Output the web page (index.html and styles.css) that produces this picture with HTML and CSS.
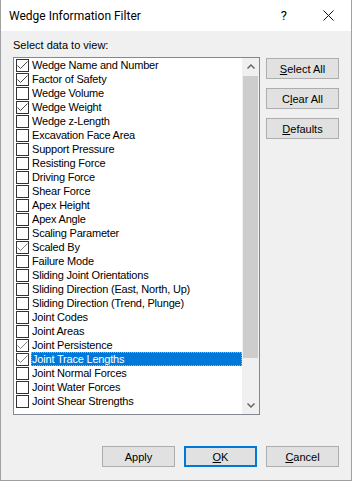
FILE: index.html
```html
<!DOCTYPE html>
<html lang="en">
<head>
    <meta charset="UTF-8">
    <meta name="viewport" content="width=device-width, initial-scale=1.0">
    <title>Wedge Information Filter</title>
    <link rel="stylesheet" href="styles.css">
</head>
<body>
    <div class="dialog">
        <div class="titlebar">
            <span class="title">Wedge Information Filter</span>
            <span class="help">?</span>
            <svg class="close" viewBox="0 0 11 11" width="11" height="11">
                <path d="M0.5 0.5 L10.5 10.5 M10.5 0.5 L0.5 10.5" />
            </svg>
        </div>

        <div class="content">
            <div class="prompt">Select data to view:</div>

            <div class="main">
                <div class="listbox">
                    <ul class="items" id="items"></ul>
                    <div class="scrollbar">
                        <div class="arrow">
                            <svg viewBox="0 0 8 5" width="8" height="5"><path d="M0.5 4.5 L4 1 L7.5 4.5" /></svg>
                        </div>
                        <div class="track"><div class="thumb"></div></div>
                        <div class="arrow">
                            <svg viewBox="0 0 8 5" width="8" height="5"><path d="M0.5 0.5 L4 4 L7.5 0.5" /></svg>
                        </div>
                    </div>
                </div>

                <div class="side-buttons">
                    <button><u>S</u>elect All</button>
                    <button>C<u>l</u>ear All</button>
                    <button><u>D</u>efaults</button>
                </div>
            </div>

            <div class="footer">
                <button>Apply</button>
                <button class="default"><u>O</u>K</button>
                <button><u>C</u>ancel</button>
            </div>
        </div>
    </div>

    <script>
        // list entries: [label, state]  state: 0 off, 1 on, 2 on (faded tick)
        const fields = [
            ["Wedge Name and Number", 1],
            ["Factor of Safety", 1],
            ["Wedge Volume", 0],
            ["Wedge Weight", 1],
            ["Wedge z-Length", 0],
            ["Excavation Face Area", 0],
            ["Support Pressure", 0],
            ["Resisting Force", 0],
            ["Driving Force", 0],
            ["Shear Force", 0],
            ["Apex Height", 0],
            ["Apex Angle", 0],
            ["Scaling Parameter", 0],
            ["Scaled By", 2],
            ["Failure Mode", 0],
            ["Sliding Joint Orientations", 0],
            ["Sliding Direction (East, North, Up)", 0],
            ["Sliding Direction (Trend, Plunge)", 0],
            ["Joint Codes", 0],
            ["Joint Areas", 0],
            ["Joint Persistence", 2],
            ["Joint Trace Lengths", 2],
            ["Joint Normal Forces", 0],
            ["Joint Water Forces", 0],
            ["Joint Shear Strengths", 0]
        ];
        const selectedIndex = 21;

        const list = document.getElementById('items');
        fields.forEach(([label, state], i) => {
            const li = document.createElement('li');
            li.className = 'item' + (i === selectedIndex ? ' selected' : '') + (state === 2 ? ' faded' : '');
            li.innerHTML = `
                <svg class="check" viewBox="0 0 13 13" width="13" height="13">
                    <rect x="0.5" y="0.5" width="12" height="12" />
                    ${state ? '<polyline points="1.5,6.5 4.5,9.5 11.5,2.5" />' : ''}
                </svg>
                <span class="label">${label}</span>`;
            list.appendChild(li);
        });
    </script>
</body>
</html>
```

FILE: styles.css
```css
body {
    margin: 0;
    background-color: #f0f0f0;
    font-family: "Liberation Sans", Arial, sans-serif;
    font-size: 11px;
    color: #000;
}
.dialog {
    width: 352px;
    height: 481px;
    box-sizing: border-box;
    border: 1px solid #a0a0a0;
    border-top: none;
    display: flex;
    flex-direction: column;
}
.titlebar {
    height: 31px;
    background-color: #fff;
    display: flex;
    align-items: center;
    padding-left: 8px;
    font-family: Roboto, "Liberation Sans", Arial, sans-serif;
    font-size: 12px;
}
.title {
    flex-grow: 1;
    margin-top: 1px;
}
.help {
    font-size: 13px;
    margin-right: 36px;
}
.close {
    margin-right: 17px;
}
.close path {
    stroke: #111;
    stroke-width: 1;
    fill: none;
}
.content {
    flex-grow: 1;
    padding: 7px 12px 0 12px;
    display: flex;
    flex-direction: column;
}
.prompt {
    height: 19px;
    line-height: 15px;
}
.main {
    display: flex;
    gap: 6px;
}
.listbox {
    width: 247px;
    height: 358px;
    box-sizing: border-box;
    border: 1px solid #828790;
    background-color: #fff;
    display: flex;
}
.items {
    list-style: none;
    margin: 0;
    padding: 0;
    flex-grow: 1;
}
.item {
    height: 14px;
    display: flex;
    align-items: center;
}
.check {
    margin-left: 2px;
    flex-shrink: 0;
}
.check rect {
    fill: #fff;
    stroke: #333;
}
.check polyline {
    fill: none;
    stroke: #4a4a4a;
    stroke-width: 1;
}
.faded .check polyline {
    stroke: #808080;
}
.label {
    flex-grow: 1;
    margin-left: 2px;
    padding-left: 1px;
    height: 14px;
    line-height: 15px;
    letter-spacing: -0.2px;
    white-space: nowrap;
}
.selected .label {
    background-color: #0078d7;
    color: #fff;
    outline: 1px dotted #f0a050;
    outline-offset: -1px;
}
.scrollbar {
    width: 17px;
    background-color: #f0f0f0;
    display: flex;
    flex-direction: column;
}
.arrow {
    height: 17px;
    display: flex;
    align-items: center;
    justify-content: center;
}
.arrow path {
    stroke: #606060;
    stroke-width: 1.4;
    fill: none;
}
.track {
    flex-grow: 1;
    padding: 1px 1px 0 1px;
}
.thumb {
    height: 282px;
    background-color: #cdcdcd;
}
.side-buttons {
    display: flex;
    flex-direction: column;
    gap: 9px;
    margin-top: 1px;
}
button {
    width: 73px;
    height: 21px;
    box-sizing: border-box;
    background-color: #e1e1e1;
    border: 1px solid #adadad;
    font-family: "Liberation Sans", Arial, sans-serif;
    font-size: 11px;
    color: #000;
    padding: 0;
}
.footer {
    margin-top: 31px;
    display: flex;
    justify-content: flex-end;
    gap: 9px;
}
.footer button.default {
    border: 2px solid #0078d7;
}
```
